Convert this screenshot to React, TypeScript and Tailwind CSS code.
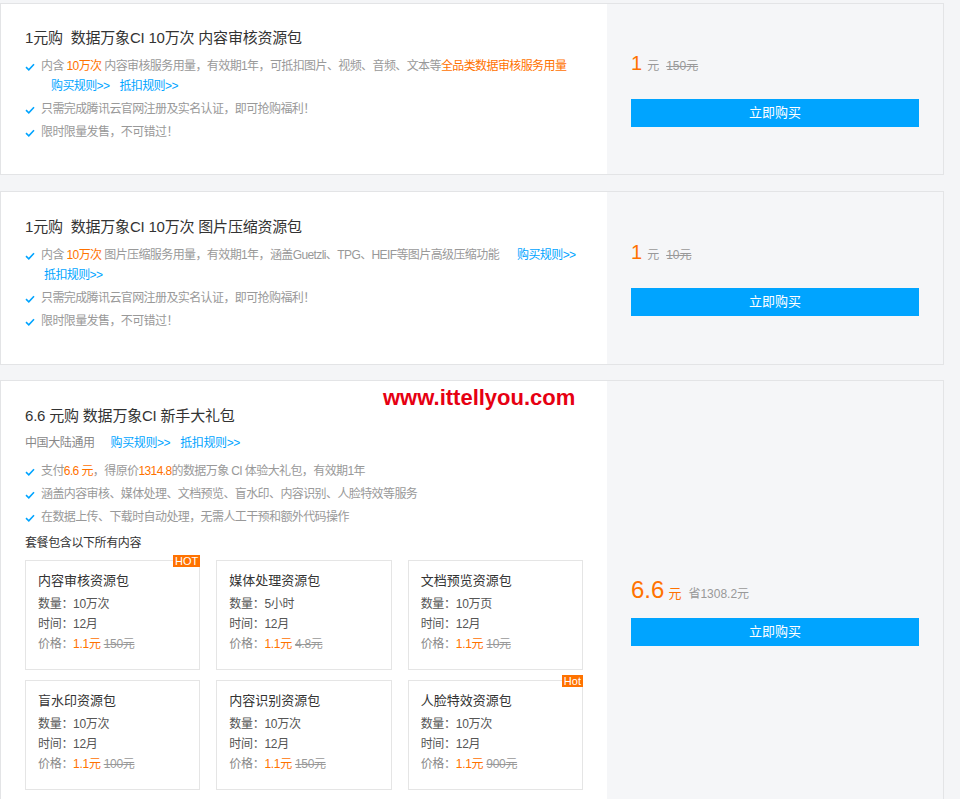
import React from "react";

const font = "font-['Liberation_Sans','Noto_Sans_CJK_SC',sans-serif]";

const Check = () => (
  <svg
    width="10"
    height="8"
    viewBox="0 0 10 8"
    className="absolute left-0 top-[7px]"
    fill="none"
  >
    <path d="M1 4.2 L3.8 6.8 L9 1.2" stroke="#00a4ff" strokeWidth="1.6" />
  </svg>
);

const Bullet = ({ children }: { children: React.ReactNode }) => (
  <li className="relative pl-[16px] text-[12px] leading-[20px] tracking-[-0.6px] text-[#999]">
    <Check />
    {children}
  </li>
);

const Orange = ({ children }: { children: React.ReactNode }) => (
  <span className="text-[#ff7200]">{children}</span>
);

const Link = ({ children, className = "" }: { children: React.ReactNode; className?: string }) => (
  <a className={`text-[#00a4ff] cursor-pointer ${className}`}>{children}</a>
);

const BuyButton = () => (
  <button className="w-full h-[28px] bg-[#00a4ff] text-white text-[13px]">立即购买</button>
);

const PriceBox = ({ old }: { old: string }) => (
  <div className="flex flex-col justify-center px-6 bg-[#f5f6f8] w-[336px] shrink-0">
    <div className="flex items-baseline h-[20px] mt-[2px]">
      <span className="text-[20px] leading-[20px] text-[#ff7200]">1</span>
      <span className="ml-[5px] text-[12px] text-[#999]">元</span>
      <span className="ml-[7px] text-[12px] text-[#999] line-through">{old}</span>
    </div>
    <div className="mt-[26px]">
      <BuyButton />
    </div>
  </div>
);

type Pack = { name: string; qty: string; old: string; badge?: string };

const packs: Pack[] = [
  { name: "内容审核资源包", qty: "10万次", old: "150元", badge: "HOT" },
  { name: "媒体处理资源包", qty: "5小时", old: "4.8元" },
  { name: "文档预览资源包", qty: "10万页", old: "10元" },
  { name: "盲水印资源包", qty: "10万次", old: "100元" },
  { name: "内容识别资源包", qty: "10万次", old: "150元" },
  { name: "人脸特效资源包", qty: "10万次", old: "900元", badge: "Hot" },
];

const PackCard = ({ p }: { p: Pack }) => (
  <div className="relative h-[110px] border border-[#e5e5e5] bg-white pl-[12px] pt-[10px]">
    {p.badge && (
      <span className="absolute right-[-1px] top-[-6px] bg-[#ff7200] px-[2px] text-[11px] leading-[12px] text-white">
        {p.badge}
      </span>
    )}
    <div className="text-[13px] leading-[20px] text-[#333]">{p.name}</div>
    <div className="mt-[3px] text-[12px] leading-[20px] tracking-[-0.3px] text-[#555]">
      <div>数量：{p.qty}</div>
      <div>时间：12月</div>
      <div className="text-[#888]">
        价格：<Orange>1.1元</Orange>{" "}
        <span className="line-through text-[#999]">{p.old}</span>
      </div>
    </div>
  </div>
);

export default function App() {
  return (
    <div className={`min-h-screen bg-[#f4f5f7] pt-[3px] pr-4 ${font}`}>
      {/* 内容审核 */}
      <div className="flex border border-[#e3e4e6] bg-white">
        <div className="flex-1 pl-6 pr-2 pt-[23px] pb-[32px]">
          <h3 className="text-[15px] leading-[22px] tracking-[-0.2px] text-[#333]">1元购&nbsp;&nbsp;数据万象CI 10万次 内容审核资源包</h3>
          <ul className="mt-[7px] space-y-[3px]">
            <Bullet>
              <span className="whitespace-nowrap">
                内含 <Orange>10万次</Orange> 内容审核服务用量，有效期1年，可抵扣图片、视频、音频、文本等
                <Orange>全品类数据审核服务用量</Orange>
              </span>
              <br />
              <Link className="ml-[10px]">购买规则&gt;&gt;</Link>
              <Link className="ml-[10px]">抵扣规则&gt;&gt;</Link>
            </Bullet>
            <Bullet>只需完成腾讯云官网注册及实名认证，即可抢购福利！</Bullet>
            <Bullet>限时限量发售，不可错过！</Bullet>
          </ul>
        </div>
        <PriceBox old="150元" />
      </div>

      {/* 图片压缩 */}
      <div className="mt-[16px] flex border border-[#e3e4e6] bg-white">
        <div className="flex-1 pl-6 pr-2 pt-[24px] pb-[33px]">
          <h3 className="text-[15px] leading-[22px] tracking-[-0.2px] text-[#333]">1元购&nbsp;&nbsp;数据万象CI 10万次 图片压缩资源包</h3>
          <ul className="mt-[7px] space-y-[3px]">
            <Bullet>
              <span className="whitespace-nowrap">
                内含 <Orange>10万次</Orange> 图片压缩服务用量，有效期1年，涵盖Guetzli、TPG、HEIF等图片高级压缩功能
                <Link className="ml-[18px]">购买规则&gt;&gt;</Link>
              </span>
              <br />
              <Link className="ml-[3px]">抵扣规则&gt;&gt;</Link>
            </Bullet>
            <Bullet>只需完成腾讯云官网注册及实名认证，即可抢购福利！</Bullet>
            <Bullet>限时限量发售，不可错过！</Bullet>
          </ul>
        </div>
        <PriceBox old="10元" />
      </div>

      {/* 新手大礼包 */}
      <div className="relative mt-[15px] flex border border-[#e3e4e6] bg-white">
        <span className="absolute left-[382px] top-[4px] font-['Liberation_Sans',sans-serif] text-[22px] font-bold leading-[26px] text-[#e60012]">
          www.ittellyou.com
        </span>
        <div className="flex-1 pl-6 pr-6 pt-[24px] pb-[48px]">
          <h3 className="text-[15px] leading-[22px] tracking-[-0.2px] text-[#333]">6.6 元购 数据万象CI 新手大礼包</h3>
          <div className="mt-[6px] text-[12px] leading-[20px] tracking-[-0.4px] text-[#888]">
            中国大陆通用
            <Link className="ml-[16px]">购买规则&gt;&gt;</Link>
            <Link className="ml-[10px]">抵扣规则&gt;&gt;</Link>
          </div>
          <ul className="mt-[8px] space-y-[3px]">
            <Bullet>
              支付<Orange>6.6 元</Orange>，得原价<Orange>1314.8</Orange>的数据万象 CI 体验大礼包，有效期1年
            </Bullet>
            <Bullet>涵盖内容审核、媒体处理、文档预览、盲水印、内容识别、人脸特效等服务</Bullet>
            <Bullet>在数据上传、下载时自动处理，无需人工干预和额外代码操作</Bullet>
          </ul>
          <div className="mt-[6px] text-[12px] leading-[20px] tracking-[-0.4px] text-[#333]">套餐包含以下所有内容</div>
          <div className="mt-[7px] grid grid-cols-3 gap-x-4 gap-y-[10px]">
            {packs.map((p) => (
              <PackCard key={p.name} p={p} />
            ))}
          </div>
        </div>
        <div className="flex flex-col justify-center px-6 bg-[#f5f6f8] w-[336px] shrink-0">
          <div className="flex items-baseline h-[28px] mt-[2px]">
            <span className="text-[24px] leading-[28px] text-[#ff7200]">6.6</span>
            <span className="ml-[4px] text-[13px] text-[#ff7200]">元</span>
            <span className="ml-[7px] text-[12px] text-[#999]">省1308.2元</span>
          </div>
          <div className="mt-[14px]">
            <BuyButton />
          </div>
        </div>
      </div>
    </div>
  );
}
